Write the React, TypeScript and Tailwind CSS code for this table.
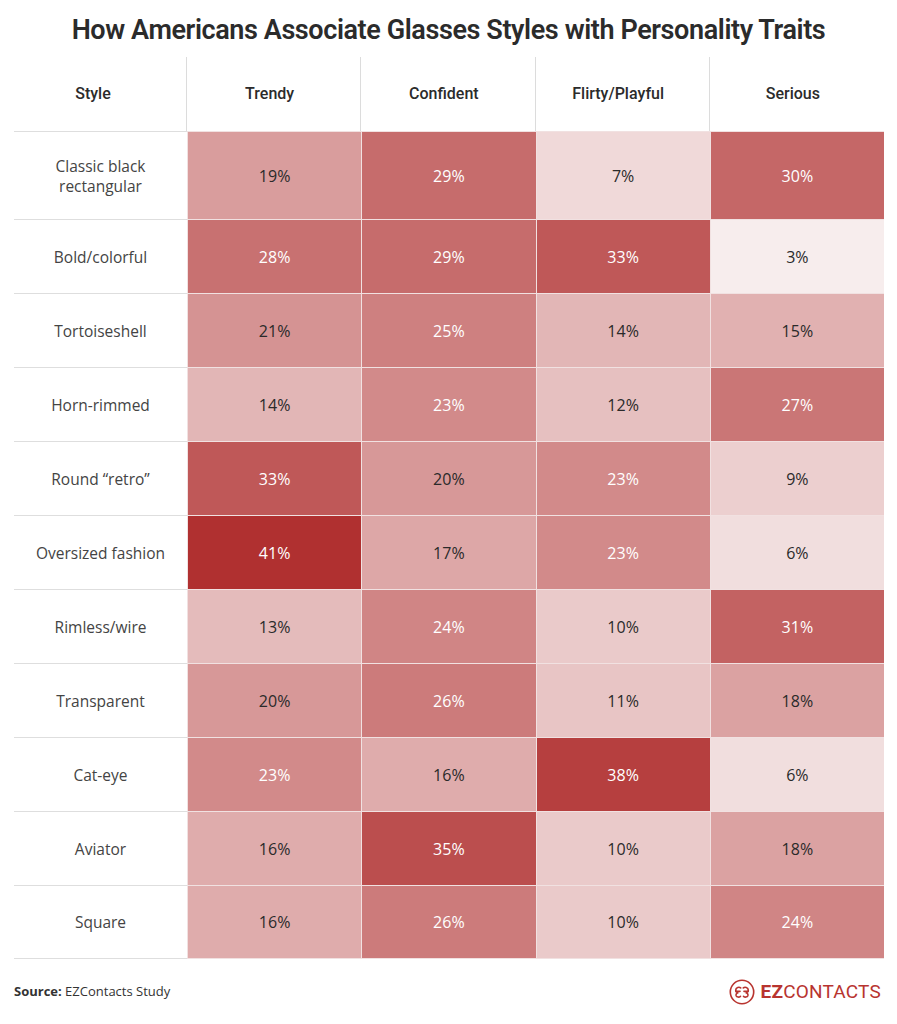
const traits = ["Trendy", "Confident", "Flirty/Playful", "Serious"];

const rows: { style: string; values: number[] }[] = [
  { style: "Classic black rectangular", values: [19, 29, 7, 30] },
  { style: "Bold/colorful", values: [28, 29, 33, 3] },
  { style: "Tortoiseshell", values: [21, 25, 14, 15] },
  { style: "Horn-rimmed", values: [14, 23, 12, 27] },
  { style: "Round “retro”", values: [33, 20, 23, 9] },
  { style: "Oversized fashion", values: [41, 17, 23, 6] },
  { style: "Rimless/wire", values: [13, 24, 10, 31] },
  { style: "Transparent", values: [20, 26, 11, 18] },
  { style: "Cat-eye", values: [23, 16, 38, 6] },
  { style: "Aviator", values: [16, 35, 10, 18] },
  { style: "Square", values: [16, 26, 10, 24] },
];

// light #f7eded at 3% -> deep #b03030 at 41%
function heat(v: number) {
  const t = Math.min(1, Math.max(0, (v - 3) / 38));
  const r = Math.round(247 - t * (247 - 176));
  const g = Math.round(237 - t * (237 - 48));
  return `rgb(${r}, ${g}, ${g})`;
}

function Logo() {
  return (
    <div className="flex items-center gap-[6px] text-[#b8342f]">
      <svg width="26" height="26" viewBox="0 0 24 24" fill="none" stroke="currentColor" strokeWidth="1.5" strokeLinecap="round">
        <circle cx="12" cy="12" r="10.8" />
        {/* left: Є-like, right: mirrored */}
        <path d="M10.8 8.2 C9.6 7.2 6.2 7.4 6.2 10.4 C6.2 11.8 7.2 12.4 8.6 12.6 C7 13 6.2 14 6.6 15.4 C7.1 17 9.4 17 10.6 16" />
        <path d="M13.2 8.2 C14.4 7.2 17.8 7.4 17.8 10.4 C17.8 11.8 16.8 12.4 15.4 12.6 C17 13 17.8 14 17.4 15.4 C16.9 17 14.6 17 13.4 16" />
        <path d="M6.4 11.4 H10.2 M13.8 11.4 H17.6" />
      </svg>
      <span className="text-[19px] leading-none tracking-[0.2px] font-['Roboto',sans-serif]">
        <span className="font-bold">EZ</span>
        <span className="font-normal">CONTACTS</span>
      </span>
    </div>
  );
}

export default function App() {
  return (
    <div className="w-[897px] h-[1024px] bg-white font-['Open_Sans',sans-serif] text-[#333]">
      {/* Title */}
      <div className="h-[57px] flex items-center justify-center pt-[4px]">
        <h1 className="text-[27px] font-semibold tracking-[-0.4px] text-[#2b2b2b] font-['Roboto',sans-serif]">
          How Americans Associate Glasses Styles with Personality Traits
        </h1>
      </div>

      {/* Table */}
      <div className="ml-[14px] w-[870px] grid grid-cols-[173px_repeat(4,1fr)]">
        <div className="h-[74px] flex items-center justify-center border-r border-[#dcdcdc] text-[16px] font-medium text-[#2b2b2b] font-['Roboto',sans-serif] pr-[14px]">
          Style
        </div>
        {traits.map((t, i) => (
          <div
            key={t}
            className={`h-[74px] flex items-center justify-center pr-[8px] text-[16px] font-medium text-[#2b2b2b] font-['Roboto',sans-serif] ${
              i < 3 ? "border-r border-[#dcdcdc]" : ""
            }`}
          >
            {t}
          </div>
        ))}

        {rows.map((row, ri) => (
          <div key={row.style} className="contents">
            <div
              className={`${ri === 0 ? "h-[88px]" : "h-[74px]"} flex items-center justify-center text-center px-[18px] border-t border-[#dedede] text-[15.5px] leading-[20px] text-[#444] ${
                ri === rows.length - 1 ? "border-b" : ""
              }`}
            >
              {row.style}
            </div>
            {row.values.map((v, ci) => (
              <div
                key={ci}
                className={`${ri === 0 ? "h-[88px]" : "h-[74px]"} flex items-center justify-center border-t border-l border-[#f1e1e1] text-[16px] ${
                  v >= 23 ? "text-white" : "text-[#2a2a2a]"
                } ${ri === rows.length - 1 ? "border-b" : ""}`}
                style={{ backgroundColor: heat(v) }}
              >
                {v}%
              </div>
            ))}
          </div>
        ))}
      </div>

      {/* Footer */}
      <div className="h-[65px] flex items-center justify-between pl-[14px] pr-[16px]">
        <p className="text-[13px] text-[#333]">
          <span className="font-bold">Source:</span> EZContacts Study
        </p>
        <Logo />
      </div>
    </div>
  );
}
